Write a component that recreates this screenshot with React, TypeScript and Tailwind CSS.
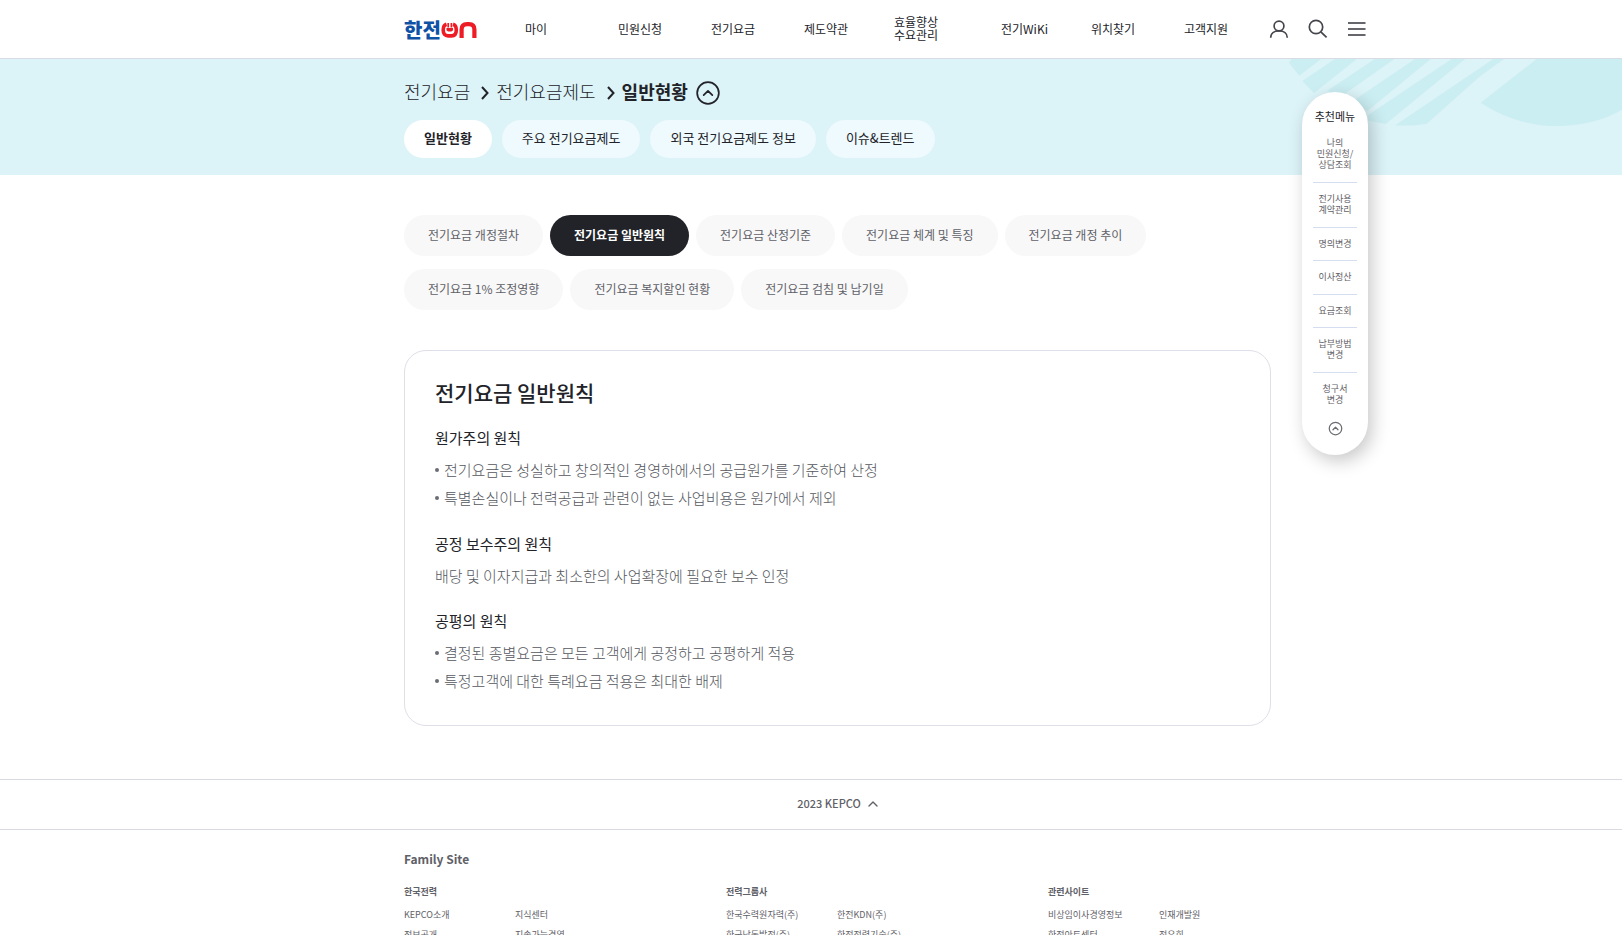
import { ChevronUp, CircleChevronUp } from "lucide-react";

const NAV = [
  { label: "마이", width: "w-[93px]" },
  { label: "민원신청", width: "w-[93px]" },
  { label: "전기요금", width: "w-[93px]" },
  { label: "제도약관", width: "w-[90px]" },
  { label: "효율향상\n수요관리", width: "w-[107px]" },
  { label: "전기WiKi", width: "w-[90px]" },
  { label: "위치찾기", width: "w-[93px]" },
  { label: "고객지원", width: "w-[84px]" },
];

const TABS = ["일반현황", "주요 전기요금제도", "외국 전기요금제도 정보", "이슈&트렌드"];

const PILLS = [
  "전기요금 개정절차",
  "전기요금 일반원칙",
  "전기요금 산정기준",
  "전기요금 체계 및 특징",
  "전기요금 개정 추이",
  "전기요금 1% 조정영향",
  "전기요금 복지할인 현황",
  "전기요금 검침 및 납기일",
];

const QUICK = [
  { label: "나의\n민원신청/\n상담조회", height: "h-[57px]" },
  { label: "전기사용\n계약관리", height: "h-[45px]" },
  { label: "명의변경", height: "h-[33px]" },
  { label: "이사정산", height: "h-[34px]" },
  { label: "요금조회", height: "h-[33px]" },
  { label: "납부방법\n변경", height: "h-[45px]" },
  { label: "청구서\n변경", height: "h-[44px]" },
];

const FAMILY = [
  { title: "한국전력", links: ["KEPCO소개", "지식센터", "정보공개", "지속가능경영"] },
  { title: "전력그룹사", links: ["한국수력원자력(주)", "한전KDN(주)", "한국남동발전(주)", "한전전력기술(주)"] },
  { title: "관련사이트", links: ["비상임이사경영정보", "인재개발원", "한전아트센터", "전우회"] },
];

const Logo = () => (
  <a href="#" aria-label="한전ON" className="flex w-[121px] items-center pt-px">
    <span className="text-[20px] leading-5 font-black text-[#0f52a5]">한전</span>
    <svg viewBox="0 0 36 16" className="h-4 w-9" fill="none" stroke="#ee1c25">
      <path d="M5.500 2.200C3 3 2.200 5 2.200 8C2.200 12 4 13.900 7 13.900H10.500C13.500 13.900 15.300 12 15.300 8C15.300 5 14.500 3 12 2.200" strokeWidth="3.600" />
      <path d="M7.200 1V5.500M10.400 1V5.500" strokeWidth="1.700" />
      <path d="M5.500 6H12V7.500Q12 9.500 8.750 9.500T5.500 7.500Z" fill="#ee1c25" stroke="none" />
      <path d="M20.600 16V7.500Q20.600 2.100 26 2.100H28Q33.400 2.100 33.400 7.500V16" strokeWidth="4.200" />
    </svg>
  </a>
);

const Header = () => (
  <header className="flex h-[59px] items-center border-b border-[#d9dbe5] pl-[calc(50%-407px)]">
    <Logo />
    <nav className="flex items-center pb-[2px]">
      {NAV.map((item) => (
        <a key={item.label} href="#" className={`${item.width} text-xs leading-[13px] whitespace-pre-line`}>
          {item.label}
        </a>
      ))}
    </nav>
    <div className="flex items-center gap-[19px] pl-px text-[#45464c]">
      <button aria-label="로그인">
        <svg viewBox="0 0 20 20" className="size-5" fill="none" stroke="currentColor" strokeWidth="1.700">
          <circle cx="10" cy="7" r="4.900" />
          <path d="M1.700 18.700C1.700 14.500 5.200 11.900 10 11.900S18.300 14.500 18.300 18.700" />
        </svg>
      </button>
      <button aria-label="검색">
        <svg viewBox="0 0 20 20" className="size-5" fill="none" stroke="currentColor" strokeWidth="1.700">
          <circle cx="8" cy="8" r="6.700" />
          <path d="M12.800 12.800L18.600 18.400" />
        </svg>
      </button>
      <button aria-label="전체메뉴">
        <svg viewBox="0 0 20 20" className="size-5" fill="none" stroke="#66676c" strokeWidth="1.900">
          <path d="M1 4H18.500M1 10H18.500M1 16H18.500" />
        </svg>
      </button>
    </div>
  </header>
);

const BannerArt = () => (
  <svg viewBox="0 0 1146 348" className="absolute top-0 right-0 h-[116px] w-[382px]" fill="#cbeef2">
    <path d="M155 0H243L178 50L147 11Z" />
    <path d="M285 0H350L222 102L187 66Z" />
    <path d="M405 0H463L300 115L262 95Z" />
    <path d="M525 0H572L382 156L340 125Z" />
    <path d="M635 0H675L437 195L385 185V168Z" />
    <path d="M760 0H792L720 52L560 194Q520 202 466 199Z" />
    <path d="M890 0L722 131C800 182 880 201 950 201C1020 201 1090 185 1146 152V0Z" />
  </svg>
);

const Crumb = () => (
  <svg viewBox="0 0 8 14" className="mt-px ml-1 h-[14px] w-2" fill="none" stroke="#222329" strokeWidth="2">
    <path d="M1 1L6.500 7L1 13" />
  </svg>
);

const Banner = () => (
  <div className="relative h-[116px] bg-[#dcf3f8] pl-[calc(50%-407px)]">
    <BannerArt />
    <div className="flex h-[61px] items-center gap-[7px] pt-[6px] text-[18px] leading-6 font-light">
      <a href="#" className="pb-1">전기요금</a>
      <Crumb />
      <a href="#" className="pb-1">전기요금제도</a>
      <Crumb />
      <strong className="pb-1 font-bold">일반현황</strong>
      <button aria-label="메뉴 접기">
        <CircleChevronUp size={26} strokeWidth={1.6} />
      </button>
    </div>
    <div className="flex gap-[10px]">
      {TABS.map((tab, i) => (
        <a
          key={tab}
          href="#"
          className={`flex h-[38px] items-center rounded-full px-5 pb-[2px] text-[13px] ${i === 0 ? "bg-white font-bold" : "bg-[#eefafd]"}`}
        >
          {tab}
        </a>
      ))}
    </div>
  </div>
);

const QuickMenu = () => (
  <aside className="absolute top-[92px] left-[calc(50%+491px)] flex w-[66px] flex-col items-center rounded-full bg-white px-[11px] pt-[18px] pb-[19px] text-center shadow-[4px_6px_18px_rgba(0,0,0,0.22)]">
    <h2 className="text-[11px] leading-3 whitespace-nowrap">추천메뉴</h2>
    <ul className="mt-1 w-full divide-y divide-[#d5def0] text-[9px] leading-[11px] text-[#5f6066]">
      {QUICK.map((item) => (
        <li key={item.label} className={`${item.height} flex items-center justify-center pb-[2px]`}>
          <a href="#" className="whitespace-pre">{item.label}</a>
        </li>
      ))}
    </ul>
    <button aria-label="위로" className="mt-1 text-[#6b6c72]">
      <CircleChevronUp size={15} strokeWidth={2} />
    </button>
  </aside>
);

const Bullets = ({ items }: { items: string[] }) => (
  <ul className="mt-2">
    {items.map((item) => (
      <li key={item} className="flex items-center gap-[5px]">
        <span className="size-1 rounded-full bg-[#6b6d75]" />
        {item}
      </li>
    ))}
  </ul>
);

const Card = () => (
  <article className="mt-10 rounded-[22px] border border-[#dedfe8] px-[30px] pt-[26px] pb-[30px] text-[15px] leading-7 font-light text-[#55575e]">
    <h1 className="text-[21px] leading-[30px] font-medium text-[#222329]">전기요금 일반원칙</h1>
    <section className="mt-[21px]">
      <h2 className="leading-5 font-normal text-[#222329]">원가주의 원칙</h2>
      <Bullets
        items={[
          "전기요금은 성실하고 창의적인 경영하에서의 공급원가를 기준하여 산정",
          "특별손실이나 전력공급과 관련이 없는 사업비용은 원가에서 제외",
        ]}
      />
    </section>
    <section className="mt-[22px]">
      <h2 className="leading-5 font-normal text-[#222329]">공정 보수주의 원칙</h2>
      <p className="mt-2">배당 및 이자지급과 최소한의 사업확장에 필요한 보수 인정</p>
    </section>
    <section className="mt-[21px]">
      <h2 className="leading-5 font-normal text-[#222329]">공평의 원칙</h2>
      <Bullets
        items={[
          "결정된 종별요금은 모든 고객에게 공정하고 공평하게 적용",
          "특정고객에 대한 특례요금 적용은 최대한 배제",
        ]}
      />
    </section>
  </article>
);

const Footer = () => (
  <footer className="mt-[53px] text-[#5f6168]">
    <div className="border-y border-[#d9dbe3] pl-[calc(50%-407px)]">
      <div className="flex max-w-[867px] justify-center">
        <button className="flex h-[49px] items-center gap-1 pb-[2px] pl-[3px] text-[11px] font-medium">
          2023 KEPCO
          <ChevronUp size={16} strokeWidth={2} />
        </button>
      </div>
    </div>
    <div className="pt-[19px] pl-[calc(50%-407px)]">
      <h2 className="text-xs leading-5 font-semibold">Family Site</h2>
      <div className="mt-[13px] flex">
        {FAMILY.map((group) => (
          <section key={group.title} className="w-[322px]">
            <h3 className="text-[9px] leading-5 font-bold">{group.title}</h3>
            <ul className="mt-[3px] grid grid-cols-[111px_1fr] text-[9px] leading-5">
              {group.links.map((link) => (
                <li key={link}>
                  <a href="#">{link}</a>
                </li>
              ))}
            </ul>
          </section>
        ))}
      </div>
    </div>
  </footer>
);

export default function App() {
  return (
    <div className="relative bg-white font-['Noto_Sans_CJK_KR','Noto_Sans',sans-serif] text-[#222329]">
      <Header />
      <Banner />
      <QuickMenu />
      <main className="pt-10 pl-[calc(50%-407px)]">
        <div className="max-w-[867px]">
          <div className="flex flex-wrap gap-x-[7px] gap-y-[13px]">
            {PILLS.map((pill, i) => (
              <a
                key={pill}
                href="#"
                className={`flex h-[41px] items-center rounded-full px-6 pb-[2px] text-xs ${
                  i === 1 ? "bg-[#222329] font-bold text-white" : "bg-[#f8f8f8] text-[#5f6168]"
                }`}
              >
                {pill}
              </a>
            ))}
          </div>
          <Card />
        </div>
      </main>
      <Footer />
    </div>
  );
}
